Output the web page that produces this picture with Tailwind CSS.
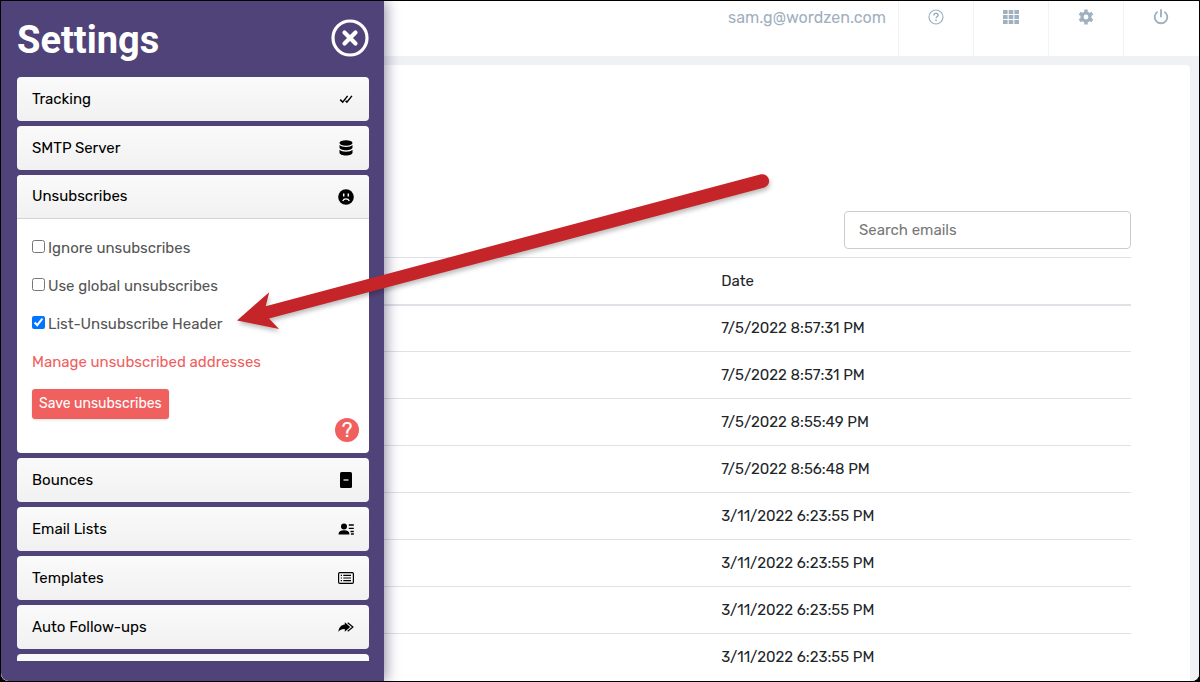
<!DOCTYPE html>
<html lang="en">
<head>
  <meta charset="UTF-8">
  <meta name="viewport" content="width=device-width, initial-scale=1.0">
  <title>Settings</title>
  <script src="https://cdn.jsdelivr.net/npm/@tailwindcss/browser@4"></script>
</head>
<body class="font-[Rubik,Roboto,sans-serif] text-base bg-black">
  <div class="relative flex h-screen border border-black bg-white rounded-b-lg overflow-hidden">

    <!-- Settings panel -->
    <aside class="relative z-10 flex flex-col w-[383px] shrink-0 bg-[#50437a] pl-4 pr-[15px] pb-5 rounded-bl-lg shadow-[2px_0_14px_rgba(40,30,80,0.5)]">
      <div class="flex items-center justify-between h-[76px] shrink-0">
        <h1 class="font-[Roboto,sans-serif] text-[38px] leading-10 pt-0.5 font-bold text-white">Settings</h1>
        <button type="button" aria-label="Close settings" class="pb-0.5">
          <svg class="w-[38px] h-[38px]" viewBox="0 0 38 38" fill="none" stroke="#fff">
            <circle cx="19" cy="19" r="17" stroke-width="3.2"/>
            <path d="M13.5 13.5l11 11M24.5 13.5l-11 11" stroke-width="4.2" stroke-linecap="round"/>
          </svg>
        </button>
      </div>

      <div class="flex-1 min-h-0 overflow-hidden flex flex-col gap-[5px]">
        <button type="button" class="flex items-center justify-between h-11 shrink-0 px-[15px] rounded bg-linear-to-b from-[#fafafa] to-[#f1f1f1] text-[15px] text-black">
          Tracking
          <svg class="w-4 h-4" viewBox="0 0 16 16" fill="none" stroke="currentColor" stroke-width="1.5">
            <path d="M2.2 8.6l2.5 2.5 4.9-6.2M7.6 9.7l1.3 1.4 5-6.2"/>
          </svg>
        </button>
        <button type="button" class="flex items-center justify-between h-11 shrink-0 px-[15px] rounded bg-linear-to-b from-[#fafafa] to-[#f1f1f1] text-[15px] text-black">
          SMTP Server
          <svg class="w-4 h-4" viewBox="0 0 16 16" fill="currentColor">
            <ellipse cx="8" cy="3" rx="6.5" ry="2.7"/>
            <path d="M1.5 5c1 1.3 3.5 2 6.5 2s5.500-.7 6.500-2v2.600c0 1.500-2.900 2.700-6.500 2.700S1.500 9.100 1.500 7.600z"/>
            <path d="M1.500 9.800c1 1.300 3.500 2 6.500 2s5.500-.7 6.500-2v2.900c0 1.500-2.900 2.700-6.500 2.700s-6.500-1.200-6.500-2.700z"/>
          </svg>
        </button>

        <!-- Open section -->
        <section class="shrink-0 rounded bg-white overflow-hidden">
          <button type="button" class="flex items-center justify-between w-full h-11 px-[15px] border-b border-[#d3d3d3] bg-linear-to-b from-[#fafafa] to-[#f1f1f1] text-[15px] text-black">
            Unsubscribes
            <svg class="w-4 h-4" viewBox="0 0 16 16">
              <circle cx="8" cy="8" r="7.8"/>
              <path d="M5.7 4.6v2.8M10.3 4.6v2.8" stroke="#fff" stroke-width="1.5"/>
              <path d="M4.7 11.9c1.2-2.8 5.4-2.8 6.6 0" stroke="#fff" stroke-width="1.2" fill="none"/>
            </svg>
          </button>
          <div class="relative px-[15px] pt-[17px] pb-[34px] text-[15px] text-[#555]">
            <div class="flex items-start gap-[3px] h-6 mb-[14px]">
              <input type="checkbox" id="ignore" class="w-[13px] h-[13px] mt-1">
              <label for="ignore" class="leading-6">Ignore unsubscribes</label>
            </div>
            <div class="flex items-start gap-[3px] h-6 mb-[14px]">
              <input type="checkbox" id="global" class="w-[13px] h-[13px] mt-1">
              <label for="global" class="leading-6">Use global unsubscribes</label>
            </div>
            <div class="flex items-start gap-[3px] h-6 mb-[14px]">
              <input type="checkbox" id="header" class="w-[13px] h-[13px] mt-1" checked>
              <label for="header" class="leading-6">List-Unsubscribe Header</label>
            </div>
            <a href="#" class="block leading-6 mb-[15px] text-[#f05f5f]">Manage unsubscribed addresses</a>
            <button type="button" class="block h-[30px] px-[7px] rounded-[3px] bg-[#f0605f] text-sm text-white shadow-sm">Save unsubscribes</button>
            <button type="button" aria-label="Help" class="absolute right-[10px] bottom-[11px] w-6 h-6 rounded-full bg-[#f0605f] text-xl leading-6 text-white">?</button>
          </div>
        </section>

        <button type="button" class="flex items-center justify-between h-11 shrink-0 px-[15px] rounded bg-linear-to-b from-[#fafafa] to-[#f1f1f1] text-[15px] text-black">
          Bounces
          <svg class="w-4 h-4" viewBox="0 0 16 16">
            <rect x="2" y="0" width="12" height="16" rx="1.5"/>
            <path d="M5.5 8h5" stroke="#fff" stroke-width="1.2"/>
          </svg>
        </button>
        <button type="button" class="flex items-center justify-between h-11 shrink-0 px-[15px] rounded bg-linear-to-b from-[#fafafa] to-[#f1f1f1] text-[15px] text-black">
          Email Lists
          <svg class="w-4 h-4" viewBox="0 0 16 16" fill="currentColor">
            <circle cx="6" cy="5.5" r="3"/>
            <path d="M.5 13.5c0-3 2-4.300 5.500-4.300s5.500 1.300 5.500 4.300z"/>
            <path d="M10.8 4h5M10.8 7.3h5M12.5 10.5h3.3M13 13h2.8" stroke="currentColor" stroke-width="1.3"/>
          </svg>
        </button>
        <button type="button" class="flex items-center justify-between h-11 shrink-0 px-[15px] rounded bg-linear-to-b from-[#fafafa] to-[#f1f1f1] text-[15px] text-black">
          Templates
          <svg class="w-4 h-4" viewBox="0 0 16 16" fill="none" stroke="currentColor" stroke-width="1.2">
            <rect x=".6" y="2.6" width="14.8" height="10.8" rx="1.2"/>
            <path d="M5.3 5.3h7.7M5.3 8h7.7M5.3 10.7h7.7M2.8 5.3h1.2M2.8 8h1.2M2.8 10.7h1.2"/>
          </svg>
        </button>
        <button type="button" class="flex items-center justify-between h-11 shrink-0 px-[15px] rounded bg-linear-to-b from-[#fafafa] to-[#f1f1f1] text-[15px] text-black">
          Auto Follow-ups
          <svg class="w-4 h-4" viewBox="0 0 16 16" fill="currentColor">
            <path d="M.4 13C.9 8.4 3 6 6.8 5.6V3.2l5.4 4.8-5.4 4.7v-2.6c-3-.1-4.8.7-6.4 2.9z"/>
            <path d="M9.7 3.8L14.9 8l-5.2 4.2" fill="none" stroke="currentColor" stroke-width="1.2"/>
          </svg>
        </button>
        <button type="button" aria-label="More settings" class="h-11 shrink-0 rounded bg-[#fafafa]"></button>
      </div>
    </aside>

    <!-- Page behind the panel -->
    <div class="flex-1 min-w-0 flex flex-col bg-[#eff1f5]">
      <header class="flex h-[55px] shrink-0 justify-end pr-px bg-white text-[#9fb0c0]">
        <span class="pt-[5px] pr-3 leading-6 text-base">sam.g@wordzen.com</span>
        <button type="button" aria-label="Help" class="flex w-[75px] justify-center pt-2 border-l border-[#f1f3f7]">
          <svg class="w-4 h-4" viewBox="0 0 16 16" fill="none" stroke="currentColor">
            <circle cx="8" cy="8" r="7" stroke-width="1.2"/>
            <path d="M5.9 6.4c.1-3 4.4-2.8 4.2-.2-.1 1.3-2.1 1.5-2.1 3.1" stroke-width="1.5"/>
            <path d="M8 10.500v1.600" stroke-width="1.600"/>
          </svg>
        </button>
        <button type="button" aria-label="Apps" class="flex w-[75px] justify-center pt-2 border-l border-[#f1f3f7]">
          <svg class="w-4 h-4" viewBox="0 0 16 16" fill="currentColor">
            <path d="M0 1h4.600v4H0zM5.700 1h4.600v4H5.700zM11.400 1H16v4h-4.600zM0 6h4.600v4H0zM5.700 6h4.600v4H5.700zM11.400 6H16v4h-4.600zM0 11h4.600v4H0zM5.700 11h4.600v4H5.700zM11.400 11H16v4h-4.600z"/>
          </svg>
        </button>
        <button type="button" aria-label="Settings" class="flex w-[75px] justify-center pt-2 border-l border-[#f1f3f7]">
          <svg class="w-4 h-4" viewBox="0 0 16 16">
            <circle cx="8" cy="8" r="4" fill="none" stroke="currentColor" stroke-width="3.2"/>
            <path d="M8 .6v3M8 12.400v3M1.600 4.300l2.600 1.500M11.800 10.200l2.600 1.500M1.600 11.700l2.600-1.500M11.800 5.800l2.600-1.500" stroke="currentColor" stroke-width="3.4"/>
          </svg>
        </button>
        <button type="button" aria-label="Log out" class="flex w-[75px] justify-center pt-2 border-l border-[#f1f3f7]">
          <svg class="w-4 h-4" viewBox="0 0 16 16" fill="none" stroke="currentColor" stroke-width="1.9">
            <path d="M4.6 2.7a6.3 6.3 0 1 0 6.8 0M8 .3v7.9"/>
          </svg>
        </button>
      </header>

      <main class="flex-1 min-h-0 overflow-hidden mt-[9px] mr-[9px] pt-[146px] pr-[59px] rounded-tr bg-white">
        <div class="flex justify-end mb-2">
          <input type="text" aria-label="Search emails" placeholder="Search emails" class="w-[287px] h-[38px] px-[14px] border border-[#ccc] rounded bg-white text-[15px] placeholder:text-[#777]">
        </div>
        <table class="w-full table-fixed border-collapse text-left text-[15px] text-[#212529]">
          <thead>
            <tr class="h-[47px] border-t border-b-2 border-[#dee2e6]">
              <th class="w-[45%]"></th>
              <th class="pl-px font-normal">Date</th>
            </tr>
          </thead>
          <tbody>
            <tr class="h-[47px] border-b border-[#dee2e6]"><td></td><td class="pl-px">7/5/2022 8:57:31 PM</td></tr>
            <tr class="h-[47px] border-b border-[#dee2e6]"><td></td><td class="pl-px">7/5/2022 8:57:31 PM</td></tr>
            <tr class="h-[47px] border-b border-[#dee2e6]"><td></td><td class="pl-px">7/5/2022 8:55:49 PM</td></tr>
            <tr class="h-[47px] border-b border-[#dee2e6]"><td></td><td class="pl-px">7/5/2022 8:56:48 PM</td></tr>
            <tr class="h-[47px] border-b border-[#dee2e6]"><td></td><td class="pl-px">3/11/2022 6:23:55 PM</td></tr>
            <tr class="h-[47px] border-b border-[#dee2e6]"><td></td><td class="pl-px">3/11/2022 6:23:55 PM</td></tr>
            <tr class="h-[47px] border-b border-[#dee2e6]"><td></td><td class="pl-px">3/11/2022 6:23:55 PM</td></tr>
            <tr class="h-[47px]"><td></td><td class="pl-px">3/11/2022 6:23:55 PM</td></tr>
          </tbody>
        </table>
      </main>
    </div>

    <!-- Arrow pointing at the header option -->
    <svg class="absolute z-20 left-[235px] top-[169px] w-[540px] h-[170px] pointer-events-none drop-shadow-[1px_3px_2px_rgba(0,0,0,0.25)]" viewBox="236 170 540 170" fill="#c52428">
      <path d="M237 320.5L269.2 292.3 265.7 306.3 761 174.3A6.9 6.9 0 0 1 764.5 187.6L269 318.5 279 329z"/>
    </svg>
  </div>
</body>
</html>
